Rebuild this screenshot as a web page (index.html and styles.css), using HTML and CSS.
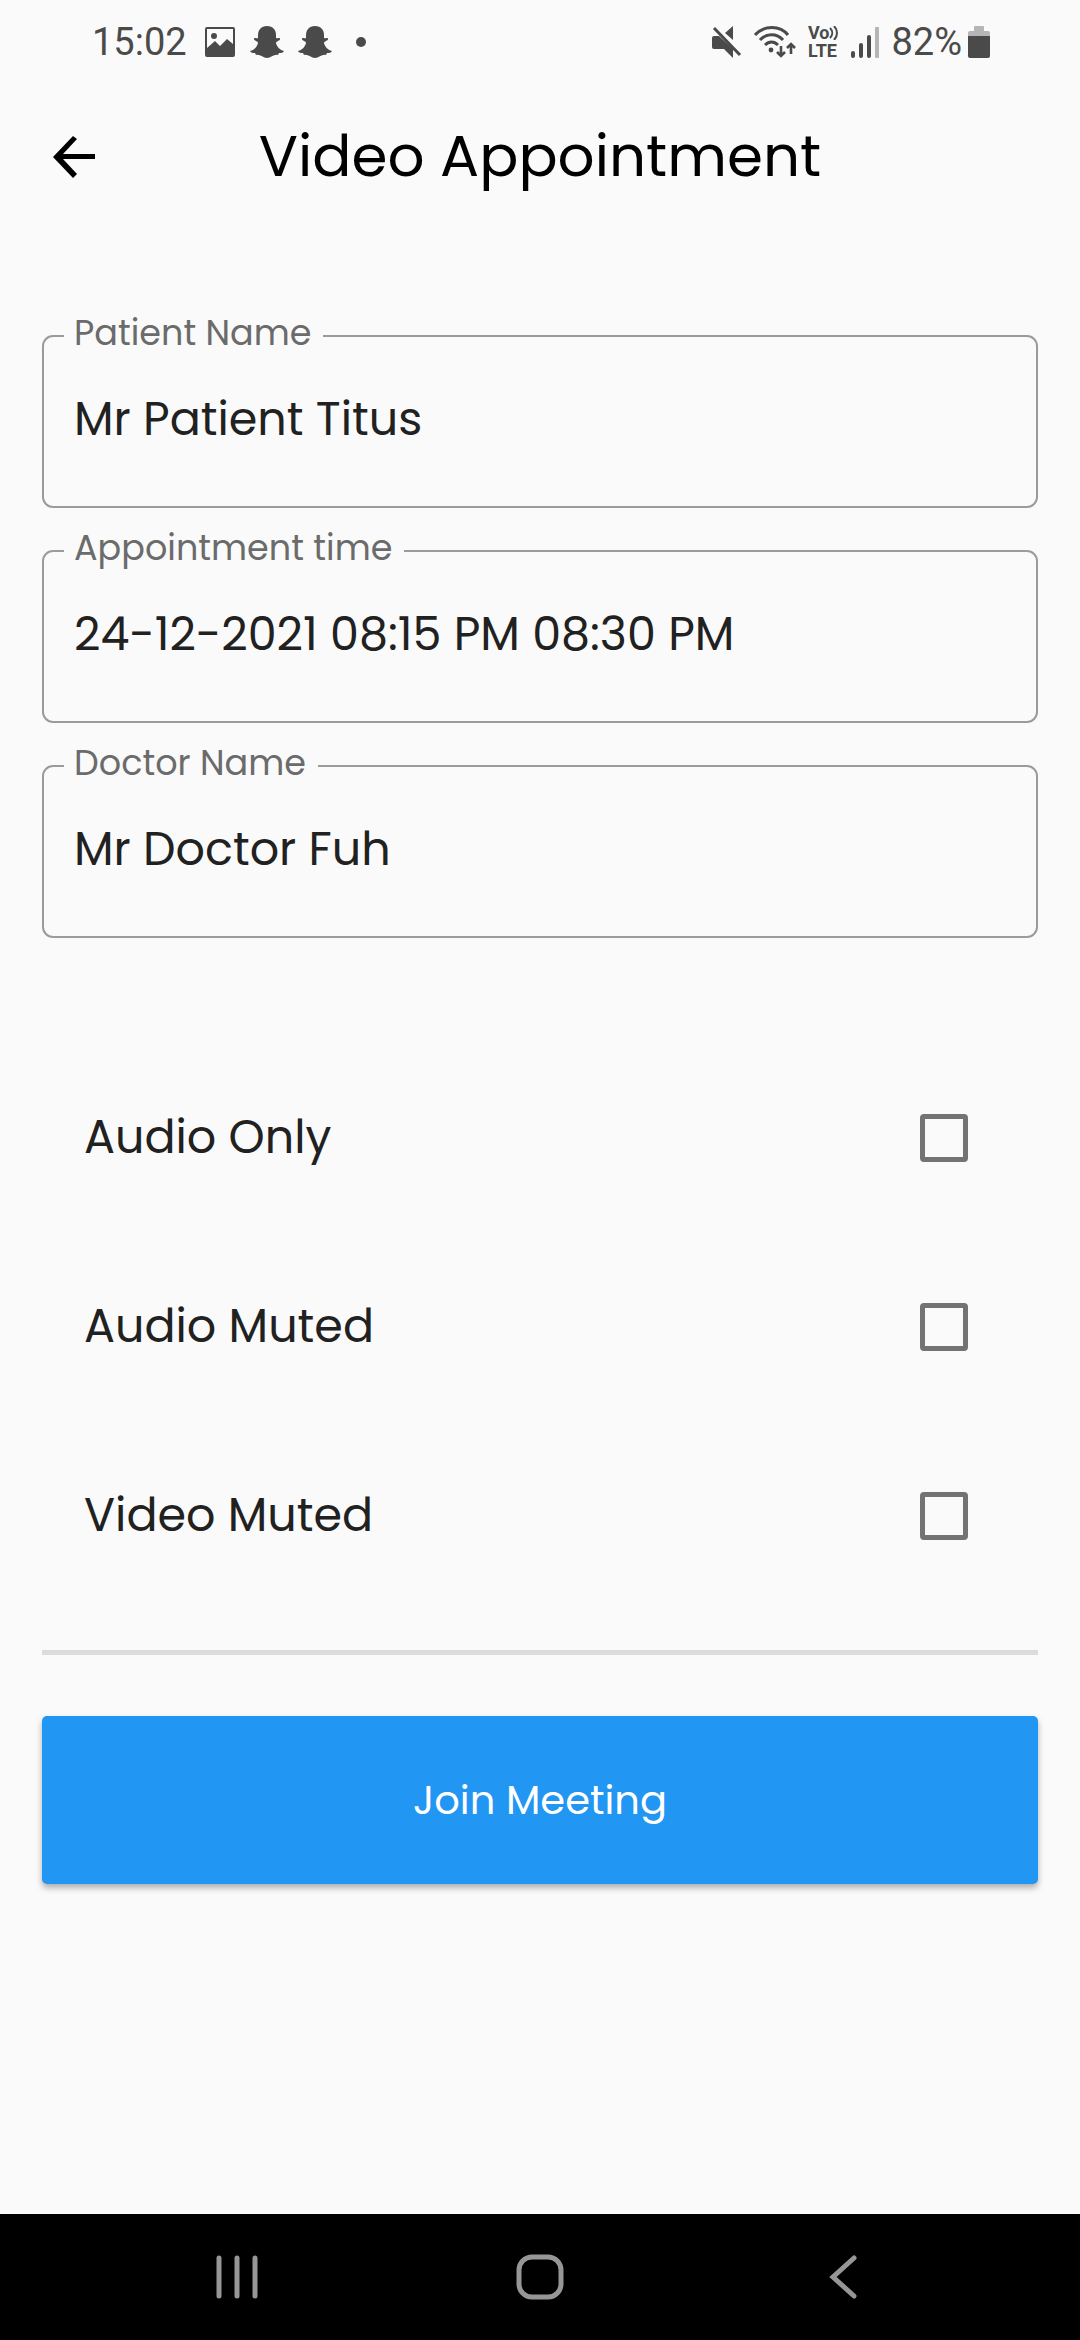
FILE: index.html
```
<!DOCTYPE html>
<html lang="en">
<head>
    <meta charset="UTF-8">
    <meta name="viewport" content="width=device-width, initial-scale=1.0">
    <title>Video Appointment</title>
    <link rel="stylesheet" href="styles.css">
</head>
<body>
    <div class="status-bar">
        <div class="status-group">
            <span class="clock">15:02</span>
            <svg class="icon-image" width="32" height="32" viewBox="0 0 32 32">
                <path fill-rule="evenodd" d="M3 1h26a2 2 0 0 1 2 2v26a2 2 0 0 1-2 2H3a2 2 0 0 1-2-2V3a2 2 0 0 1 2-2zm0 2v19l8-7 5 5 7-7 6 5V3zm7 4a3 3 0 1 1 0 6 3 3 0 0 1 0-6z"/>
            </svg>
            <svg class="icon-ghost" width="34" height="32" viewBox="0 0 34 32">
                <path d="M17 0C11 0 8 4 8 9v3c-2 1-4-1-4 1s4 2 4 4c-1 4-4 7-8 8 1 2 3 2 5 2l1 2c4-1 7 3 11 3s7-4 11-3l1-2c2 0 4 0 5-2-4-1-7-4-8-8 0-2 4-2 4-4s-2 0-4-1V9c0-5-3-9-9-9z"/>
            </svg>
            <svg class="icon-ghost" width="34" height="32" viewBox="0 0 34 32">
                <path d="M17 0C11 0 8 4 8 9v3c-2 1-4-1-4 1s4 2 4 4c-1 4-4 7-8 8 1 2 3 2 5 2l1 2c4-1 7 3 11 3s7-4 11-3l1-2c2 0 4 0 5-2-4-1-7-4-8-8 0-2 4-2 4-4s-2 0-4-1V9c0-5-3-9-9-9z"/>
            </svg>
            <span class="more-dot"></span>
        </div>
        <div class="status-group status-right">
            <svg width="30" height="32" viewBox="0 0 30 32">
                <path d="M21 0v14l-8-7zM2 10h5l14 13v9l-9-9H2a2 2 0 0 1-2-2v-9a2 2 0 0 1 2-2z"/>
                <path class="line" stroke-width="3" d="M2 2l26 27"/>
            </svg>
            <svg width="42" height="32" viewBox="0 0 42 32">
                <path class="line" stroke-width="3" d="M1 9c9-10 25-10 33 0M6 14c6-7 17-7 23 0M11 19c4-4 9-4 13 0"/>
                <circle cx="17" cy="24" r="2.4"/>
                <path class="line" stroke-width="2.6" d="M27 20v10M23 26l4 4 4-4M37 28V18M33 22l4-4 4 4"/>
            </svg>
            <span class="volte">
                <span>Vo<svg width="10" height="14" viewBox="0 0 10 14"><path class="line" stroke-width="2" d="M1 2c3 3 3 7 0 10M5 0c4 4 4 10 0 14"/></svg></span>
                <span>LTE</span>
            </span>
            <svg width="28" height="32" viewBox="0 0 28 32">
                <rect x="0" y="25" width="4" height="7" rx="2"/>
                <rect x="8" y="17" width="4" height="15" rx="2"/>
                <rect x="16" y="9" width="4" height="23" rx="2"/>
                <rect class="faded" x="24" y="1" width="4" height="31" rx="1"/>
            </svg>
            <span class="battery">82%
                <svg width="22" height="34" viewBox="0 0 22 34">
                    <path class="faded" d="M6 2q0-1 1-1h8q1 0 1 1v4h4q2 0 2 2v4H0V8q0-2 2-2h4z"/>
                    <path d="M0 11h22v20q0 2-2 2H2q-2 0-2-2z"/>
                </svg>
            </span>
        </div>
    </div>

    <header class="app-bar">
        <button type="button" class="back" aria-label="Back">
            <svg width="42" height="42" viewBox="0 0 42 42"><path d="M42 18v5H10l14 15-4 4L0 21 20 0l4 3-14 15z"/></svg>
        </button>
        <h1>Video Appointment</h1>
    </header>

    <main>
        <form>
            <div class="fields">
                <fieldset>
                    <legend><label for="patient">Patient Name</label></legend>
                    <input type="text" id="patient" value="Mr Patient Titus">
                </fieldset>
                <fieldset>
                    <legend><label for="time">Appointment time</label></legend>
                    <input type="text" id="time" value="24-12-2021 08:15 PM 08:30 PM">
                </fieldset>
                <fieldset>
                    <legend><label for="doctor">Doctor Name</label></legend>
                    <input type="text" id="doctor" value="Mr Doctor Fuh">
                </fieldset>
            </div>

            <div class="options">
                <label class="option">Audio Only <input type="checkbox"></label>
                <label class="option">Audio Muted <input type="checkbox"></label>
                <label class="option">Video Muted <input type="checkbox"></label>
            </div>

            <hr>
            <button type="button" class="join">Join Meeting</button>
        </form>
    </main>

    <nav class="nav-bar">
        <button type="button" aria-label="Recents">
            <svg width="42" height="46" viewBox="0 0 42 46"><path d="M3 4v38M21 4v38M39 4v38"/></svg>
        </button>
        <button type="button" aria-label="Home">
            <svg width="48" height="46" viewBox="0 0 48 46"><rect x="3" y="3" width="42" height="40" rx="13"/></svg>
        </button>
        <button type="button" aria-label="Back">
            <svg width="28" height="46" viewBox="0 0 28 46"><path d="M25 4L4 23l21 19"/></svg>
        </button>
    </nav>
</body>
</html>
```

FILE: styles.css
```
* {
    box-sizing: border-box;
}
body {
    margin: 0;
    min-height: 100vh;
    display: flex;
    flex-direction: column;
    background-color: #fafafa;
    color: #212121;
    font-family: Poppins, Inter, sans-serif;
    font-feature-settings: "cv11";
}
button, input {
    font: inherit;
    font-feature-settings: inherit;
    color: inherit;
}
button {
    border: none;
    background: none;
    padding: 0;
}
svg {
    display: block;
    flex: none;
}

/* status bar */
.status-bar {
    display: flex;
    justify-content: space-between;
    align-items: center;
    height: 84px;
    padding: 0 90px 0 92px;
    color: #4a4a4a;
    font-family: Roboto, sans-serif;
    font-size: 38px;
}
.status-bar svg {
    fill: #4a4a4a;
}
.status-bar .line {
    fill: none;
    stroke: #4a4a4a;
}
.status-bar .faded {
    fill: #b5b5b5;
}
.status-group {
    display: flex;
    align-items: center;
    gap: 14px;
}
.clock {
    margin-right: 3px;
}
.more-dot {
    width: 10px;
    height: 10px;
    margin-left: 10px;
    border-radius: 50%;
    background-color: #4a4a4a;
}
.status-right {
    gap: 12px;
}
.volte {
    display: flex;
    flex-direction: column;
    font-size: 18px;
    font-weight: bold;
    line-height: 18px;
}
.volte span {
    display: flex;
    align-items: center;
}
.battery {
    display: flex;
    align-items: center;
    gap: 6px;
}

/* app bar */
.app-bar {
    display: grid;
    grid-template-columns: 42px 1fr 42px;
    align-items: center;
    height: 146px;
    padding: 0 53px;
    color: #000;
}
h1 {
    margin: 0;
    padding-bottom: 4px;
    font-size: 58px;
    font-weight: normal;
    text-align: center;
}

main {
    flex: 1;
    padding: 85px 42px 0;
}
.fields {
    display: flex;
    flex-direction: column;
    gap: 22px;
}
fieldset {
    margin: 0;
    min-width: 0;
    height: 193px;
    border: 2px solid #9b9b9b;
    border-radius: 11px;
    padding: 0 20px;
}
legend {
    padding: 0 12px 6px 10px;
    color: #6b6b6b;
    font-size: 35px;
    line-height: 36px;
}
input[type="text"] {
    display: block;
    width: 100%;
    height: 124px;
    border: none;
    background: none;
    padding: 0 10px;
    font-size: 46px;
}

.options {
    padding: 105px 70px 0 42px;
}
.option {
    display: flex;
    justify-content: space-between;
    align-items: center;
    height: 189px;
    font-size: 46px;
}
input[type="checkbox"] {
    appearance: none;
    width: 48px;
    height: 48px;
    margin: 0;
    border: 5px solid #737373;
    border-radius: 4px;
}
hr {
    height: 5px;
    margin: 40px 0 61px;
    border: none;
    background-color: #dcdcdc;
}
.join {
    display: block;
    width: 100%;
    height: 168px;
    border-radius: 5px;
    background-color: #2196f3;
    box-shadow: 0 4px 6px rgba(0, 0, 0, 0.3);
    color: #fff;
    font-size: 40px;
}

/* system navigation */
.nav-bar {
    display: grid;
    grid-template-columns: repeat(3, 1fr);
    height: 126px;
    padding: 0 86px;
    background-color: #000;
}
.nav-bar button {
    display: flex;
    justify-content: center;
    align-items: center;
}
.nav-bar svg {
    fill: none;
    stroke: #969696;
    stroke-width: 5px;
    stroke-linecap: round;
}
```
